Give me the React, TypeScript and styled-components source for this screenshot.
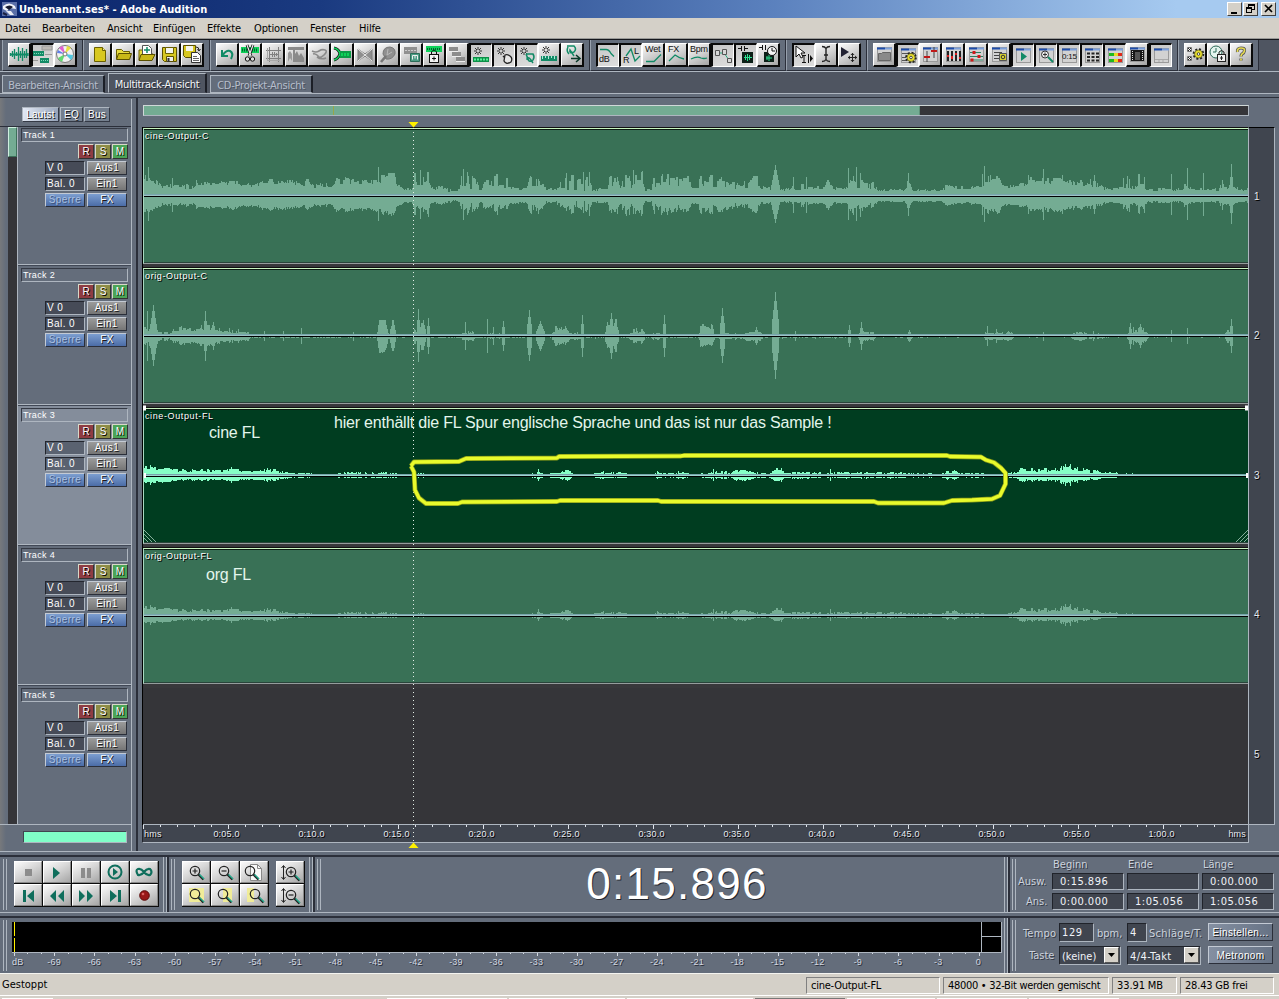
import React from 'react';
import styled, { createGlobalStyle, css } from 'styled-components';

const UI = '"DejaVu Sans Condensed", "DejaVu Sans", sans-serif';
const SANS = '"Liberation Sans", Arial, sans-serif';

const C = {
  panel: '#646d7b',
  dark: '#4f5561',
  field: '#40454f',
  pit: '#353539',
  light: '#aeb6c0',
  edge: '#2b2f3a',
  face: '#d4d0c8',
  clip: '#397156',
  clipWave: '#74ac93',
  sel: '#003d20',
  selWave: '#86ffc6',
};

const Global = createGlobalStyle`
  html, body { margin: 0; padding: 0; overflow: hidden; background: ${C.panel}; }
  * { box-sizing: border-box; }
  svg { display: block; }
`;

const Frame = styled.div`
  width: 1279px;
  height: 999px;
  display: flex;
  flex-direction: column;
  font: 11px/13px ${UI};
  font-stretch: condensed;
  white-space: nowrap;
  overflow: hidden;
  background: ${C.panel};
`;

/* ---------- title and menu ---------- */
const TitleBar = styled.header`
  height: 18px;
  flex: none;
  display: flex;
  align-items: center;
  padding: 0 3px 0 2px;
  background: linear-gradient(90deg, #0a246a 0%, #1a3a80 25%, #5a80bd 60%, #a6caf0 92%);
  color: #fff;
  font-weight: bold;
`;
const TitleText = styled.span`
  flex: 1;
  margin-left: 2px;
  letter-spacing: 0.08px;
`;
const WinButton = styled.span<{ $gap?: boolean }>`
  width: 15px;
  height: 14px;
  margin-left: ${p => (p.$gap ? 3 : 1)}px;
  background: ${C.face};
  border: 1px solid;
  border-color: #fff #404040 #404040 #fff;
`;
const MenuBar = styled.nav`
  height: 21px;
  flex: none;
  display: flex;
  align-items: center;
  padding-left: 5px;
  background: ${C.face};
  color: #000;
  border-bottom: 1px solid #9a9a98;
`;
const MenuItem = styled.span<{ $w: number }>`
  width: ${p => p.$w}px;
  letter-spacing: -0.15px;
`;

/* ---------- toolbar ---------- */
const ToolBar = styled.div`
  height: 33px;
  flex: none;
  display: flex;
  padding-left: 2px;
  background: ${C.dark};
  border-top: 1px solid #15171c;
  border-bottom: 1px solid ${C.light};
`;
const ToolGroup = styled.div`
  display: flex;
  height: 31px;
  padding: 3px 5px 0;
  background: ${C.panel};
  border: 1px solid;
  border-color: #8a93a0 ${C.edge} ${C.edge} #98a1ad;
  border-top-width: 0;
`;
const ToolButton = styled.span<{ $on?: boolean }>`
  width: 23px;
  height: 24px;
  background: ${p =>
    p.$on ? 'linear-gradient(160deg,#c6c6c6,#dedede)' : 'linear-gradient(150deg,#fbfbfb,#d2d2d2 50%,#a4a4a4)'};
  border: 1px solid;
  border-width: ${p => (p.$on ? '2px 1px 1px 2px' : '1px 2px 2px 1px')};
  border-color: ${p => (p.$on ? '#0a0a0a #fff #fff #0a0a0a' : '#fff #0a0a0a #0a0a0a #fff')};
`;

/* ---------- tabs ---------- */
const TabStrip = styled.div`
  height: 26px;
  flex: none;
  display: flex;
  align-items: flex-end;
  background: ${C.dark};
  border-bottom: 1px solid ${C.edge};
  box-shadow: inset 0 -3px 0 ${C.panel}, inset 0 -4px 0 ${C.light};
  padding: 0 0 4px 2px;
  gap: 3px;
`;
const Tab = styled.div<{ $w: number; $active?: boolean }>`
  width: ${p => p.$w}px;
  height: ${p => (p.$active ? 20 : 18)}px;
  border: 1px solid;
  border-color: ${C.light} #1c1f27 ${p => (p.$active ? C.dark : C.light)} ${C.light};
  border-right-width: 2px;
  background: ${p => (p.$active ? C.dark : C.panel)};
  color: ${p => (p.$active ? '#f4f6fa' : '#b6becb')};
  text-shadow: 1px 1px 0 ${p => (p.$active ? '#23262e' : '#4b5361')};
  text-align: center;
  line-height: ${p => (p.$active ? 21 : 19)}px;
  letter-spacing: -0.25px;
`;

/* ---------- main ---------- */
const Main = styled.div`
  height: 753px;
  flex: none;
  display: flex;
`;
const SideBar = styled.aside`
  width: 138px;
  display: flex;
  border-right: 2px solid ${C.edge};
  background: linear-gradient(90deg, #77797c 0, #646d7b 6px);
`;
const SideBody = styled.div`
  width: 131px;
  display: flex;
  flex-direction: column;
`;
const SideSplit = styled.div`
  width: 5px;
  border-left: 1px solid ${C.light};
  background: ${C.panel};
  margin-top: 1px;
`;
const ViewTabs = styled.div`
  height: 29px;
  padding: 9px 0 0 22px;
  display: flex;
  border-bottom: 1px solid ${C.edge};
`;
const ViewTab = styled.span<{ $w: number; $on?: boolean }>`
  width: ${p => p.$w}px;
  height: 15px;
  margin-right: 1px;
  border: 1px solid;
  border-color: ${C.light} #343945 #343945 ${C.light};
  background: ${p => (p.$on ? 'linear-gradient(100deg,#e4eaf6,#94a2b8)' : '#747f8e')};
  color: #fff;
  text-shadow: 1px 1px 0 #111;
  font: 10px/14px ${SANS};
  text-align: center;
  letter-spacing: 0.2px;
`;
const TrackList = styled.div`
  height: 698px;
  display: flex;
  padding-left: 8px;
  border-bottom: 1px solid ${C.light};
`;
const ScrollRail = styled.div`
  width: 11px;
  background: ${C.pit};
  border-right: 1px solid ${C.light};
`;
const ScrollThumb = styled.div`
  height: 30px;
  background: ${C.clipWave};
  border: 1px solid;
  border-color: #d0eee0 #3d705a #3d705a #d0eee0;
`;
const TrackCol = styled.div`
  flex: 1;
`;
const TrackPanel = styled.section<{ $sel?: boolean; $first?: boolean; $last?: boolean }>`
  height: ${p => (p.$first ? 138 : p.$last ? 139 : 140)}px;
  padding: ${p => (p.$first ? 1 : 3)}px 3px 0 3px;
  background: ${p => (p.$sel ? '#848d9b' : 'transparent')};
  border-bottom: ${p => (p.$last ? 0 : 1)}px solid ${C.light};
  box-shadow: ${p => (p.$first ? 'none' : 'inset 0 1px 0 #414856')};
  display: flex;
  flex-direction: column;
  align-items: flex-end;
`;
const TrackName = styled.div`
  width: 107px;
  height: 14px;
  align-self: flex-start;
  border: 1px solid;
  border-color: #353a45 ${C.light} ${C.light} #353a45;
  color: #fff;
  font: 9px/12px ${SANS};
  letter-spacing: 0.35px;
  padding-left: 1px;
`;
const ArmRow = styled.div`
  display: flex;
  gap: 1px;
  margin: 2px 0 2px 0;
`;
const Arm = styled.span<{ $bg: string }>`
  width: 16px;
  height: 15px;
  background: ${p => p.$bg};
  border: 1px solid;
  border-color: #d8d8c8 #333 #333 #d8d8c8;
  color: #fff;
  text-shadow: 1px 1px 0 #000;
  font: 10px/14px ${SANS};
  text-align: center;
`;
const CellRow = styled.div`
  display: flex;
  gap: 2px;
  margin: 0 1px 2px 0;
`;
const cell = css`
  width: 40px;
  height: 14px;
  border: 1px solid;
  font: 10px/12px ${SANS};
  letter-spacing: 0.4px;
`;
const ValueCell = styled.span<{ $sel?: boolean }>`
  ${cell}
  border-color: #23262e ${C.light} ${C.light} #23262e;
  background: ${p => (p.$sel ? '#5a6270' : '#464b57')};
  color: #fff;
  padding-left: 1px;
`;
const PushCell = styled.span<{ $blue?: boolean; $dim?: boolean }>`
  ${cell}
  border-color: #c3cad4 #2b2f3a #2b2f3a #c3cad4;
  background: ${p => (p.$blue ? 'linear-gradient(#7c9ed0,#4b6ca6)' : 'linear-gradient(#9b9b9b,#757575)')};
  color: ${p => (p.$dim ? '#a9c0e2' : '#fff')};
  text-shadow: 1px 1px 0 ${p => (p.$dim ? '#40567f' : '#1a1a1a')};
  text-align: center;
`;
const SideFoot = styled.div`
  padding: 6px 0 0 23px;
`;
const ZoomBar = styled.div`
  width: 104px;
  height: 12px;
  background: #80ffc8;
  border: 1px solid;
  border-color: #40454f ${C.light} ${C.light} #40454f;
`;

const Stage = styled.div`
  flex: 1;
  padding: 7px 0 0 4px;
`;
const Overview = styled.div`
  width: 1106px;
  height: 11px;
  margin-left: 1px;
  background: ${C.pit};
  border: 1px solid;
  border-color: #d0d8d8 ${C.light} ${C.light} #d0d8d8;
  display: flex;
`;
const OverviewPart = styled.div<{ $w: number; $mark?: boolean }>`
  width: ${p => p.$w}px;
  background: ${C.clipWave};
  border-right: 1px solid ${p => (p.$mark ? '#9aa648' : '#5d8f78')};
`;
const StageGrid = styled.div`
  display: flex;
  margin-top: 11px;
  position: relative;
`;
const Lanes = styled.div`
  width: 1107px;
  border-right: 1px solid ${C.light};
  border-left: 1px solid #000;
  border-top: 1px solid #000;
`;
const Lane = styled.div<{ $bg: string }>`
  height: 136px;
  margin-bottom: 4px;
  background: ${p => p.$bg};
  border-top: 1px solid #c8f4c0;
  border-bottom: 1px solid #959c9c;
  border-left: 1px solid #a8d8c0;
  box-shadow: inset 0 1px 0 #0a1a10, inset 0 -1px 0 #28443a, 0 -1px 0 #111, 0 4px 0 #38383b;
  position: relative;
`;
const EmptyLane = styled.div`
  height: 136px;
  background: ${C.pit};
`;
const ClipName = styled.span`
  position: absolute;
  left: 1px;
  top: 2px;
  color: #fff;
  text-shadow: 1px 1px 0 #000;
  font: 9px/11px ${SANS};
  letter-spacing: 0.62px;
`;
const Note = styled.span<{ $x: number; $y: number }>`
  position: absolute;
  left: ${p => p.$x}px;
  top: ${p => p.$y}px;
  color: #e4f6ec;
  font: 16px/18px ${SANS};
  letter-spacing: -0.21px;
`;
const Numbers = styled.div`
  width: 26px;
  height: 698px;
  background: ${C.field};
  border: 1px solid;
  border-color: #000 ${C.light} ${C.light} ${C.field};
  border-left: 0;
`;
const NumberCell = styled.div`
  height: 139.4px;
  padding: 63px 0 0 5px;
  color: #e4e8ee;
  text-shadow: 1px 1px 0 #000;
  font: 10px/12px ${SANS};
`;
const RulerBox = styled.div`
  width: 1107px;
  height: 19px;
  background: ${C.field};
  border: 1px solid;
  border-color: ${C.light} ${C.light} ${C.light} #23262e;
  margin-top: -1px;
  display: flex;
  flex-direction: column;
`;
const RulerText = styled.div`
  display: flex;
  justify-content: space-between;
  color: #e8ecf2;
  font: 9px/11px ${SANS};
  text-shadow: 1px 1px 0 #000;
  letter-spacing: 0.2px;
  padding: 0 2px 0 1px;
`;
const RulerMark = styled.span<{ $w: number; $align?: string }>`
  width: ${p => p.$w}px;
  text-align: ${p => p.$align || 'center'};
`;
const Overlay = styled.svg`
  position: absolute;
  left: 0;
  top: -8px;
`;

/* ---------- bottom ---------- */
const Splitter = styled.div`
  height: 6px;
  flex: none;
  border-top: 1px solid ${C.light};
  border-bottom: 2px solid ${C.edge};
  background: ${C.panel};
`;
const BottomRow = styled.div`
  height: 55px;
  flex: none;
  display: flex;
  padding-left: 3px;
`;
const Grip = styled.div`
  width: 4px;
  margin: 2px 0 2px;
  border: 1px solid ${C.light};
  border-width: 0 1px;
  flex: none;
`;
const VSplit = styled.div`
  width: 6px;
  flex: none;
  margin-right: 2px;
  border-left: 1px solid ${C.light};
  border-right: 2px solid ${C.edge};
  box-shadow: inset -1px 0 0 ${C.light};
`;
const PadGrid = styled.div<{ $cols: number; $ml: number; $mr: number }>`
  display: grid;
  grid-template-columns: repeat(${p => p.$cols}, 29px);
  grid-auto-rows: 23px;
  height: 46px;
  margin: 4px ${p => p.$mr}px 0 ${p => p.$ml}px;
  background: #0c0c0c;
  flex: none;
`;
const Pad = styled.span`
  width: 28px;
  height: 22px;
  background: linear-gradient(150deg, #fbfbfb, #d8d8d8 45%, #a6a6a6);
  border: 1px solid;
  border-color: #fff #888 #888 #fff;
`;
const BigTime = styled.div`
  flex: 1;
  text-align: center;
  color: #fff;
  font: 44px/54px ${SANS};
  letter-spacing: 1.25px;
  text-shadow: 1px 1px 0 #23262e;
  padding-left: 29px;
`;
const TimeGrid = styled.div`
  display: grid;
  grid-template-columns: 35px 75px 75px 72px;
  grid-template-rows: 15px 20px 20px;
  padding-left: 1px;
  width: 263px;
  flex: none;
`;
const Label = styled.span<{ $ml?: number; $mt?: number; $w?: number; $ls?: number }>`
  margin: ${p => p.$mt || 0}px 0 0 ${p => p.$ml || 0}px;
  width: ${p => (p.$w ? p.$w + 'px' : 'auto')};
  letter-spacing: ${p => p.$ls ?? 0}px;
  line-height: 15px;
  color: #ccd3dd;
  text-shadow: 1px 1px 0 #343945;
`;
const TimeField = styled.span`
  height: 17px;
  width: 72px;
  margin-top: 1px;
  background: ${C.field};
  border: 1px solid;
  border-color: #20232a ${C.light} ${C.light} #20232a;
  color: #f0f3f8;
  padding-left: 7px;
  line-height: 16px;
  letter-spacing: 0.5px;
`;
const MeterBox = styled.div`
  width: 990px;
  margin: 4px 2px 0 5px;
  flex: none;
`;
const MeterText = styled.div`
  display: flex;
  color: #d3d9e2;
  font: 9px/11px ${SANS};
  letter-spacing: 0.2px;
  text-shadow: 1px 1px 0 #2b2f3a;
`;
const MeterMark = styled.span`
  width: 40.2px;
  flex: none;
  text-align: center;
`;
const TempoBox = styled.div`
  display: flex;
  flex-direction: column;
  gap: 4px;
  padding-top: 5px;
  flex: none;
`;
const TempoRow = styled.div`
  display: flex;
  height: 19px;
`;
const SmallField = styled.span<{ $w: number; $ml?: number; $ls?: number; $lh?: number }>`
  width: ${p => p.$w}px;
  height: 19px;
  margin-left: ${p => p.$ml || 0}px;
  background: ${C.field};
  border: 1px solid;
  border-color: #20232a ${C.light} ${C.light} #20232a;
  color: #f0f3f8;
  line-height: ${p => p.$lh || 18}px;
  letter-spacing: ${p => p.$ls || 0}px;
  padding-left: 2px;
  display: flex;
  justify-content: space-between;
`;
const DropButton = styled.span`
  width: 15px;
  height: 16px;
  margin-right: 1px;
  background: ${C.face};
  border: 1px solid;
  border-color: #fff #555 #555 #fff;
`;
const ActionButton = styled.span<{ $ml: number }>`
  width: 65px;
  height: 18px;
  margin-left: ${p => p.$ml}px;
  border: 1px solid;
  border-color: #c3cad4 #2b2f3a #2b2f3a #c3cad4;
  background: linear-gradient(100deg, #8590a2, #667284);
  color: #fff;
  text-shadow: 1px 1px 0 #1a1a1a;
  font: 10px/17px ${SANS};
  letter-spacing: 0.35px;
  text-align: center;
`;
const StatusBar = styled.footer`
  height: 26px;
  flex: none;
  background: ${C.face};
  border-top: 1px solid #f4f4f0;
  color: #000;
  display: flex;
  flex-direction: column;
`;
const StatusRow = styled.div`
  display: flex;
  height: 22px;
  padding: 3px 4px 0 2px;
  gap: 3px;
  border-bottom: 1px solid #fff;
`;
const StatusText = styled.span<{ $w: number; $cell?: boolean; $ls?: number }>`
  width: ${p => p.$w}px;
  height: 17px;
  flex: none;
  line-height: 16px;
  letter-spacing: ${p => p.$ls ?? 0}px;
  border: solid ${p => (p.$cell ? '1px' : '0')};
  border-color: #808080 #fff #fff #808080;
  padding-left: ${p => (p.$cell ? 4 : 0)}px;
`;
const TaskStrip = styled.div`
  display: flex;
  gap: 2px;
  padding: 2px 0 0 2px;
`;
const TaskEdge = styled.span<{ $w: number; $c?: string }>`
  width: ${p => p.$w}px;
  height: 1px;
  background: ${p => p.$c || 'transparent'};
`;

/* ---------- icons ---------- */
const G = '#128a66';
const BG = '#0fd25a';

type IconProps = { w?: number; h?: number; children?: React.ReactNode };
const Ico = ({ w = 20, h = 21, children }: IconProps) => (
  <svg width={w} height={h} viewBox={`0 0 ${w} ${h}`} fill="none" strokeWidth={1}>
    {children}
  </svg>
);

const Win = ({ children }: { children?: React.ReactNode }) => (
  <Ico>
    <rect x="3.5" y="3.5" width="14" height="14" fill="#d2d2d2" stroke="#9a9a9a" />
    <path d="M3 4.500h8" stroke="#1c4cac" strokeWidth="2" />
    <path d="M11 4.500h7" stroke="#7ca0dc" strokeWidth="2" />
    {children}
  </Ico>
);
const Spark = ({ x = 3, y = 2 }: { x?: number; y?: number }) => (
  <path transform={`translate(${x} ${y})`} d="M4 0v3M4 5v3M0 4h3M5 4h3M1 1l2 2M7 1L5 3M1 7l2-2M7 7L5 5" stroke="#333" />
);
const Gear = ({ x, y }: { x: number; y: number }) => (
  <g transform={`translate(${x} ${y})`}>
    <circle r="4.6" stroke="#222" strokeWidth="2.4" strokeDasharray="1.9 1.7" />
    <circle r="4" fill="#e8de30" stroke="#444410" strokeWidth=".6" />
    <circle r="1.3" fill="#fff" stroke="#222" strokeWidth=".8" />
  </g>
);
const WAVE_BITS = 'M1.5 9v3M3.500 7v6M5.500 5v10M7.500 8v4M9.500 3v14M11.500 7v7M13.500 4v13M15.500 7v7M17.500 5v9M19 9v3';

const icons: Record<string, React.ReactNode> = {
  wave: <Ico><path d={WAVE_BITS} stroke={G} strokeWidth="1.3" /><path d="M1 10.500h18" stroke={G} strokeWidth="2" /></Ico>,
  multi: (
    <Ico>
      <path d="M9 1h10v4H9z" fill="#bdb9b4" stroke="#999" /><path d="M0 6h11v5H0z" fill={G} /><path d="M7 13h9v5H7z" fill={G} />
      <path d="M1 8.500h9M8 15.500h7" stroke="#7fd8b8" strokeDasharray="1 1" /><path d="M12 9.500h7M0 15.500h5" stroke="#999" />
    </Ico>
  ),
  cd: (
    <Ico>
      <circle cx="10" cy="10" r="8.500" fill="#f2f2f2" stroke="#777" />
      <path d="M10 10L4 4a8 8 0 0 1 4-2z" fill="#e060d0" /><path d="M10 10l6-6a8 8 0 0 0-4-2z" fill="#e8e040" />
      <path d="M10 10l8 1a8 8 0 0 1-2 5z" fill="#50c8e0" /><path d="M10 10l-7 4a8 8 0 0 0 4 4z" fill="#60d870" />
      <path d="M10 10L2 9l1-3z" fill="#6080e8" /><circle cx="10" cy="10" r="2" fill="#fff" stroke="#777" />
    </Ico>
  ),
  file: <Ico><path d="M4.500 3.500h8l3 3v11h-11z" fill="#d8c820" stroke="#6a6000" /><path d="M12.500 3.500v3h3" fill="#f4ec90" stroke="#6a6000" /></Ico>,
  open: <Ico><path d="M3.500 15V5.500h5l2 2h6V10" fill="#e8dc40" stroke="#6a6000" /><path d="M3.500 15.500l2-6h13l-2 6z" fill="#c8b818" stroke="#5a5000" /></Ico>,
  openAdd: (
    <Ico>
      <path d="M3 16V6h4v4h10" fill="#e8dc40" stroke="#6a6000" />
      <path d="M6.500 1.500h6l3 3v7h-9z" fill="#fff" stroke="#555" /><path d="M8 6h6M11 3v6" stroke={G} strokeWidth="1.5" />
      <path d="M3 16.500l2-6h14l-3 6z" fill="#c8b818" stroke="#5a5000" />
    </Ico>
  ),
  save: (
    <Ico>
      <path d="M3.500 3.500h14v14h-12l-2-2z" fill="#d8c820" stroke="#5a5000" /><path d="M6.500 3.500h8v6h-8z" fill="#f4f4ec" stroke="#6a6000" />
      <path d="M7.500 12.500h7v5h-7z" fill="#eee" stroke="#5a5000" /><path d="M9.500 14v4" stroke="#333" strokeWidth="2" />
    </Ico>
  ),
  saveAs: (
    <Ico>
      <path d="M1.500 1.500h12v12h-10l-2-2z" fill="#d8c820" stroke="#5a5000" /><path d="M4 2h7v5H4z" fill="#f4f4ec" />
      <path d="M14 3q3 0 3 3M15.500 5l1.500 2 1.500-2" stroke="#222" /><path d="M9.500 8.500h6l3 3v7h-9z" fill="#fff" stroke="#333" />
      <path d="M11 12.500h4M11 14.500h6M11 16.500h6" stroke="#666" />
    </Ico>
  ),
  undo: <Ico><path d="M5 6v6h6M6 11Q9 6 13 7q4 2 1 8" stroke={G} strokeWidth="2" /></Ico>,
  cut: (
    <Ico>
      <path d="M1 3h18v6H1z" fill={BG} /><path d="M2 6h16" stroke="#056030" strokeDasharray="1 1" strokeWidth="3" />
      <path d="M7 1l4 11M13 1L9 12" stroke="#111" strokeWidth="2.8" /><path d="M7 1l4 11M13 1L9 12" stroke="#eee" strokeWidth="1.200" />
      <circle cx="7.500" cy="15" r="2.200" stroke="#111" fill="#ddd" /><circle cx="12.500" cy="15" r="2.200" stroke="#111" fill="#ddd" />
    </Ico>
  ),
  crop: <Ico><path d="M6.500 3v15M15.500 3v15M3 6.500h15M3 14.500h15" stroke="#808080" /><path d="M7 10.500h8M9.500 8v5M11.500 8v5M13.500 9v3" stroke="#808080" /><path d="M4.500 4v12M4 16.500h13" stroke="#a8a8a8" /></Ico>,
  trim: <Ico><path d="M2 3h16v3H9v4l2-3 2 5 2-3 3 5v4H7V6H2z" fill="#8a8a8a" /><path d="M2 9l2-2 2 3v7l-2-3-2 4z" fill="#9a9a9a" /></Ico>,
  plug: <Ico><path d="M3 7q4 2 7 0t6-1-1 5-7 2q4 3 9 1M4 10q3-1 6 3" stroke="#8a8a8a" strokeWidth="1.600" /></Ico>,
  merge: <Ico><path d="M2 4q5 1 6 6-2 5-6 6" stroke="#111" strokeWidth="3" /><path d="M2 4q5 1 6 6-2 5-6 6" stroke={BG} strokeWidth="1.500" /><path d="M8 7h11v7H8z" fill="#0c9c48" /><path d="M9 10.500h9" stroke={BG} strokeWidth="3" strokeDasharray="2 1" /></Ico>,
  fade: <Ico><path d="M3 5v12l7-5 7 5V5l-7 5z" fill="#8e8e8e" stroke="#7a7a7a" /><path d="M3 5l14 12M17 5L3 17" stroke="#e8e8e8" /></Ico>,
  brush: <Ico><path d="M5 10q0-7 7-7 6 1 5 7-3 6-9 5z" fill="#909090" stroke="#777" /><path d="M8 12l-5 6" stroke="#777" strokeWidth="2.600" /><path d="M10 5l-1 6 5-3" stroke="#b8b8b8" /></Ico>,
  mix: <Ico><path d="M3 3h13v7H3z" fill="#909090" /><path d="M4 6.500h11" stroke="#ccc" strokeDasharray="2 1" /><path d="M9.500 9.500h9v8h-9z" fill="#4c9c84" stroke="#2c6c58" /><path d="M11.500 15.500v-4h5v4M14 11.500v3" stroke="#eee" /></Ico>,
  lock: <Ico><path d="M2 2h16v6H2z" fill={BG} /><path d="M3 5h14" stroke="#056030" strokeDasharray="1 1" strokeWidth="2" /><path d="M7.500 11V8q2.500-4 5 0v3" stroke="#111" /><rect x="5.500" y="10.500" width="9" height="8" fill="#f4f4f4" stroke="#111" /><path d="M8 14.500h4M10 12.500v4" stroke="#111" /></Ico>,
  stack: <Ico><path d="M2 3h9v4H2zM5 8h9v4H5zM9 13h9v4H9z" fill="#8c8c8c" /><path d="M2 7.500h9M5 12.500h9M9 17.500h9" stroke="#eee" /></Ico>,
  sparkWave: <Ico><Spark /><path d="M2 12h16v5H2z" fill="#0c9048" /><path d="M3 14.500h14" stroke="#5af09a" strokeWidth="2" strokeDasharray="2 1" /></Ico>,
  sparkHand: <Ico><Spark /><path d="M9 11l2 2M11 10q2-1 5 1t1 6q-5 3-7-1z" stroke="#222" strokeWidth="1.300" fill="#e6e6e6" /></Ico>,
  sparkLoop: <Ico><Spark /><path d="M9 9h7q2 3 0 6-4 3-5-1 0-4 5 4M9 9q2 3 1 6" stroke={G} strokeWidth="1.500" /></Ico>,
  sparkGrid: <Ico><Spark /><path d="M2 12h16v5H2z" fill={G} /><path d="M3.500 12v3M6.500 12v2M9.500 12v3M12.500 12v2M15.500 12v3" stroke="#b0e8d8" /></Ico>,
  loopArrow: <Ico><path d="M5 2h7q3 3 0 6-5 2-4-2l4 6M6 3q-2 4 1 7" stroke={G} strokeWidth="1.500" /><path d="M9 14.500h8M14 11l4 3.500-4 3.500" stroke="#083828" strokeWidth="1.500" /></Ico>,
  curve: <Ico><path d="M2 4.500h6q3 0 5 4l3 3" stroke={G} strokeWidth="1.300" /></Ico>,
  pan: <Ico><path d="M5 11l5-7 4 12 5-5" stroke={G} strokeWidth="1.300" /></Ico>,
  wet: <Ico><path d="M3 17.500h8l7-7" stroke={G} strokeWidth="1.300" /></Ico>,
  fx: <Ico><path d="M3 17l6-6q4 3 9 4" stroke={G} strokeWidth="1.300" /></Ico>,
  bpm: <Ico><path d="M2 15q6-3 10-1 3 1 6 0" stroke={G} strokeWidth="1.300" /></Ico>,
  nodes: <Ico><path d="M5 8h6l5 7" stroke="#2aa880" /><path d="M2.500 5.500h4v5h-4zM9.500 4.500h4v5h-4zM14.500 13.500h4v4h-4z" fill="#d8d8d8" stroke="#555" /></Ico>,
  snapWave: <Ico><path d="M2 3.500h3M5.500 1v5M8.500 1v5M9 3.500h3" stroke="#111" /><path d="M6 7h11v11H6z" fill="#0c2018" /><path d="M8 12.500h8M9.500 10v5M11.500 9v7M13.500 10v5" stroke="#2ce090" /></Ico>,
  snapClock: <Ico><path d="M1 3.500h3M4.500 1v5M7.500 1v5" stroke="#111" /><path d="M6 8h10v10H6z" fill="#0c2018" /><path d="M8 14h6M9 12v4M11 11v6" stroke="#2ce090" /><circle cx="14" cy="7" r="4.500" fill="#f4f4f4" stroke="#111" /><path d="M14 4v3h3" stroke="#111" /></Ico>,
  hybrid: <Ico><path d="M2 1v11l3-3 2 4 2-1-2-4h4z" fill="#fff" stroke="#111" /><path d="M8 10.500h4M8 17.500h4M10 11v6M14.500 9v9" stroke="#111" /><path d="M16 10v7l3-3.500z" fill="#111" /></Ico>,
  ibeam: <Ico><path d="M6 2.500q3 0 4 2 1-2 4-2M6 17.500q3 0 4-2 1 2 4 2M10 4v12M8 11h4" stroke="#222" strokeWidth="1.400" /></Ico>,
  move: <Ico><path d="M2 3v10l8-5z" fill="#223" /><path d="M9 13.500h9M13.500 9v9" stroke="#222" /><path d="M9 13.500l2-2v4zM18 13.500l-2-2v4zM13.500 9l-2 2h4zM13.500 18l-2-2h4z" fill="#222" /></Ico>,
  wFolder: <Win><path d="M4.500 9.500h3l1-1h8v8h-12z" fill="#8a8a8a" stroke="#666" /></Win>,
  wGear: <Win><path d="M4 8.500h13M4 12.500h4M4 15.500h4" stroke="#555" /><Gear x={13} y={12.5} /></Win>,
  wFader: <Win><path d="M7 7v11M14 3v11" stroke="#444" /><path d="M4 13h6M11 7h6" stroke="#c01818" strokeWidth="2" /></Win>,
  wBars: <Win><path d="M5 7v10M9 7v10M13 7v10M17 7v10" stroke="#222" strokeWidth="2" /><path d="M5 11v2M9 12v3M13 9v2M17 13v2" stroke="#e02020" strokeWidth="2" /></Win>,
  wMixer: <Win><path d="M4 8.500h11M4 12.500h13M4 16h13" stroke="#2a8060" /><path d="M8 7v3M13 11v3M6 14.500v3" stroke="#d01818" strokeWidth="3" /></Win>,
  wCue: <Win><path d="M5 8.500h8M5 11.500h5M5 14.500h5" stroke="#444" /><path d="M10.500 9.500h7v7h-7z" fill="#d8d030" stroke="#555" /><circle cx="14" cy="13" r="1.800" stroke="#333" /></Win>,
  wPlay: <Win><path d="M8 7v9l6-4.500z" fill={G} /></Win>,
  wZoom: <Win><circle cx="9" cy="9.500" r="3.500" stroke="#333" fill="#eee" /><path d="M7 9.500h4M9 7.500v4" stroke="#333" /><path d="M12 12l5 5" stroke={G} strokeWidth="2" /></Win>,
  wTime: <Win />,
  wTable: <Win><path d="M5 8.500h3M9.500 8.500h3M14 8.500h3M5 12h3M9.500 12h3M14 12h3M5 15.500h3M9.500 15.500h3M14 15.500h3" stroke="#222" strokeWidth="2" /></Win>,
  wLevel: <Win><path d="M4 8h5v3H4zM4 14h5v3H4z" fill="#20b820" /><path d="M9 8h4v3H9zM9 14h4v3H9z" fill="#e8d820" /><path d="M13 8h4v3h-4zM13 14h4v3h-4z" fill="#e02818" /></Win>,
  wFilm: <Win><path d="M4 6h13v11H4z" fill="#181818" /><path d="M5.500 7v10M15.500 7v10" stroke="#ddd" strokeDasharray="1 1" /><path d="M8 8h5v8H8z" fill="#555" /></Win>,
  wStatus: <Win><path d="M4 14.500h13M8 15v2M12 15v2" stroke="#aaa" /></Win>,
  prefs: <Ico><path d="M2.500 3.500h4v4h-4zM2.500 12.500h4v4h-4z" stroke="#777" fill="#f4f4f4" /><path d="M3 4l3 3M6 4L3 7M3 13l3 3M6 13l-3 3" stroke="#222" /><Gear x={13.5} y={10} /></Ico>,
  clockLock: <Ico><circle cx="8" cy="8" r="6" fill="#e4f4ee" stroke="#2a6a58" /><path d="M8 4v4H5" stroke="#2a6a58" /><path d="M11 11V8q2.500-3 5 0v3" stroke="#222" /><rect x="9.500" y="10.500" width="8" height="7" fill="#f2f2f2" stroke="#222" /><path d="M13.500 12v4M12 14h3" stroke="#222" /></Ico>,
  help: <Ico><path d="M6.500 8q-.5-4 3.500-4t3.500 2.600-2.500 3.400q-1 1-1 2.500M10 14.500v2" stroke="#555" strokeWidth="3.200" /><path d="M6.500 8q-.5-4 3.500-4t3.500 2.600-2.500 3.400q-1 1-1 2.500M10 14.500v2" stroke="#e8dc50" strokeWidth="1.700" /></Ico>,
};

const IconWord = styled.span<{ $x: number; $y: number; $s?: number }>`
  position: absolute;
  left: ${p => p.$x}px;
  top: ${p => p.$y}px;
  font: ${p => p.$s || 8}px/8px ${SANS};
  color: #111;
  letter-spacing: -0.2px;
`;
const WordWrap = styled.span`
  position: relative;
  display: block;
`;
const words: Record<string, [string, number, number, number][]> = {
  curve: [['dB', 1, 10, 9]],
  pan: [['L', 13, 2, 9], ['R', 2, 11, 9]],
  wet: [['Wet', 2, 1, 9]],
  fx: [['FX', 2, 1, 9]],
  bpm: [['Bpm', 1, 1, 9]],
  wTime: [['0:15', 3, 8, 8]],
};

const groups: [string, boolean?][][] = [
  [['wave'], ['multi', true], ['cd']],
  [['file'], ['open'], ['openAdd'], ['save'], ['saveAs']],
  [['undo'], ['cut'], ['crop'], ['trim'], ['plug'], ['merge'], ['fade'], ['brush'], ['mix'], ['lock'], ['stack'],
    ['sparkWave', true], ['sparkHand', true], ['sparkLoop', true], ['sparkGrid'], ['loopArrow']],
  [['curve', true], ['pan', true], ['wet'], ['fx'], ['bpm'], ['nodes', true], ['snapWave', true], ['snapClock']],
  [['hybrid', true], ['ibeam'], ['move']],
  [['wFolder'], ['wGear', true], ['wFader'], ['wBars'], ['wMixer'], ['wCue'], ['wPlay', true], ['wZoom', true],
    ['wTime', true], ['wTable', true], ['wLevel', true], ['wFilm'], ['wStatus', true]],
  [['prefs'], ['clockLock'], ['help']],
];

const T = '#0f6e5c';
const transport: React.ReactNode[] = [
  <path d="M10 7h7v7h-7z" fill="#8c8c8c" />,
  <path d="M9 5v12l7-6z" fill={T} />,
  <path d="M8 6h4v10H8zM14 6h4v10h-4z" fill="#8c8c8c" />,
  <><circle cx="13" cy="10" r="6.500" stroke={T} strokeWidth="2" /><path d="M11 6v8l5-4z" fill={T} /></>,
  <path d="M13 10q-3-4-6-3t0 6q3 1 6-3t6-3q3 3 0 6-3 1-6-3z" stroke={T} strokeWidth="2.200" />,
  <path d="M8 5h3v12H8zM19 5v12l-7-6z" fill={T} />,
  <path d="M12 5v12l-6-6zM20 5v12l-6-6z" fill={T} />,
  <path d="M6 5v12l6-6zM14 5v12l6-6z" fill={T} />,
  <path d="M8 5v12l7-6zM16 5h3v12h-3z" fill={T} />,
  <><circle cx="13.500" cy="10.500" r="4.800" fill="#981818" stroke="#5a0808" /><circle cx="12" cy="9" r="1.300" fill="#d86060" /></>,
];

const Lens = ({ x, y, sign, fill = 'none' }: { x: number; y: number; sign?: '+' | '-'; fill?: string }) => (
  <>
    <circle cx={x} cy={y} r="4.700" stroke="#222" strokeWidth="1.200" fill={fill} />
    {sign && <path d={`M${x - 2.500} ${y}h5${sign === '+' ? `M${x} ${y - 2.500}v5` : ''}`} stroke="#222" strokeWidth="1.200" />}
    <path d={`M${x + 3.500} ${y + 3.500}l5 5`} stroke="#222" strokeWidth="2.400" />
    <path d={`M${x + 4.500} ${y + 3.500}l4.500 4.500`} stroke="#20b090" strokeWidth="1.300" />
  </>
);
const zoomMain: React.ReactNode[] = [
  <Lens x={12} y={9} sign="+" />,
  <Lens x={12} y={9} sign="-" />,
  <><path d="M9.500 2.500h7l4 4v12h-11z" fill="#f8f8f8" stroke="#888" /><path d="M16.500 2.500v4h4" stroke="#888" /><Lens x={9} y={9} /></>,
  <><path d="M6 3h15v14H6z" fill="#f0ec98" /><Lens x={12} y={9} fill="#f0ec98" /></>,
  <><path d="M11 3h9v14h-9z" fill="#f0ec98" /><Lens x={11} y={9} /></>,
  <><path d="M6 3h7v14H6z" fill="#f0ec98" /><Lens x={14} y={9} /></>,
];
const Tall = () => <path d="M6.500 4v13M4.500 6l2-2.500 2 2.500M4.500 15l2 2.500 2-2.500" stroke="#222" />;
const zoomVert: React.ReactNode[] = [
  <><Tall /><Lens x={14} y={10} sign="+" /></>,
  <><Tall /><Lens x={14} y={10} sign="-" /></>,
];

/* ---------- waveforms ---------- */
type Seg = [number, number, number, number];
type Spike = [number, number, number?];

// Segments are [from, to, peak, floor]; spikes are [x, height, half width].
const dialog: Seg[] = [
  [144, 156, 23, 13], [156, 161, 16, 10], [161, 195, 13, 8], [195, 225, 17, 12], [225, 240, 17, 11], [240, 262, 15, 10],
  [262, 285, 20, 13], [285, 312, 18, 11], [312, 333, 14, 9], [333, 372, 20, 13], [372, 386, 24, 13], [386, 396, 26, 13],
  [396, 403, 14, 9], [403, 413, 9, 7], [413, 430, 27, 10], [430, 445, 11, 7], [445, 461, 10, 5], [461, 478, 28, 8],
  [478, 483, 12, 6], [483, 509, 24, 7], [509, 529, 11, 6], [529, 545, 27, 9], [545, 558, 10, 6], [558, 591, 26, 6],
  [591, 609, 10, 5], [609, 619, 28, 10], [619, 623, 12, 7], [623, 644, 28, 9], [644, 653, 8, 5], [653, 677, 28, 8],
  [677, 691, 21, 9], [691, 699, 12, 8], [699, 729, 27, 10], [729, 751, 17, 8], [751, 759, 22, 12], [759, 770, 11, 7],
  [770, 792, 9, 6], [792, 810, 13, 7], [810, 826, 11, 8], [826, 833, 20, 8], [833, 850, 11, 7], [850, 863, 29, 8],
  [863, 877, 16, 7], [877, 906, 8, 6], [906, 911, 18, 7], [911, 944, 8, 6], [944, 949, 14, 8], [949, 982, 11, 7],
  [982, 989, 32, 10], [989, 1001, 23, 11], [1001, 1016, 14, 9], [1016, 1028, 14, 10], [1028, 1066, 20, 13],
  [1066, 1093, 18, 11], [1093, 1103, 15, 9], [1103, 1123, 10, 7], [1123, 1130, 26, 8], [1130, 1136, 12, 7],
  [1136, 1146, 25, 8], [1146, 1183, 10, 6], [1183, 1190, 14, 8], [1190, 1220, 9, 6], [1220, 1228, 14, 7],
  [1228, 1236, 13, 8], [1236, 1248, 10, 6],
];
const dialogSpikes: Spike[] = [
  [148, 30], [172, 19], [378, 30], [420, 27], [463, 28], [775, 32, 4], [793, 20], [806, 20], [848, 29], [856, 30],
  [908, 24, 1], [984, 31], [1028, 22], [1043, 28], [1062, 22], [1094, 22, 2], [1171, 23], [1187, 29], [1203, 24],
  [1222, 17], [1231, 33, 1],
];
const speech: Seg[] = [
  [144, 150, 14, 5], [150, 158, 20, 9], [158, 173, 6, 2], [173, 194, 11, 5], [194, 219, 12, 6], [219, 240, 9, 4],
  [240, 250, 6, 3], [250, 378, 3, 1], [378, 387, 21, 13], [387, 391, 4, 2], [391, 395, 21, 12], [395, 414, 2, 1],
  [414, 417, 14, 6], [420, 425, 17, 10], [425, 463, 3, 1], [463, 474, 7, 3], [474, 500, 4, 1], [500, 527, 3, 1],
  [553, 568, 12, 5], [568, 580, 5, 3], [580, 606, 3, 1], [606, 618, 18, 8], [618, 630, 3, 1], [630, 644, 10, 4],
  [644, 652, 2, 1], [652, 662, 5, 2], [662, 699, 3, 1], [699, 714, 13, 5], [714, 745, 4, 2], [745, 762, 7, 3],
  [762, 845, 3, 1], [859, 875, 6, 3], [875, 985, 2, 1], [985, 1013, 6, 3], [1013, 1072, 2, 1], [1072, 1085, 6, 3],
  [1085, 1108, 4, 1], [1108, 1128, 2, 1], [1128, 1148, 10, 4], [1148, 1226, 2, 1], [1226, 1230, 10, 6], [1230, 1248, 2, 1],
];
const speechSpikes: Spike[] = [
  [153, 32, 3], [147, 26], [205, 26, 1], [213, 15, 2], [301, 9], [283, 6], [264, 6], [353, 5], [418, 28, 1], [428, 19, 1],
  [465, 15], [487, 18], [493, 10], [503, 16, 1], [529, 27, 2], [540, 16, 4], [582, 22, 1], [611, 24, 2], [664, 22, 1],
  [722, 29, 2], [756, 10, 2], [775, 45, 3], [795, 6], [849, 12, 1], [861, 15, 1], [909, 7, 2], [987, 11], [996, 8],
  [1043, 5], [1093, 6], [1130, 14, 1], [1140, 13, 2], [1171, 7], [1187, 9], [1231, 18, 1],
];
const ambient: Seg[] = [
  [144, 172, 11, 7], [172, 200, 8, 5], [200, 214, 8, 5], [214, 228, 7, 5], [228, 240, 9, 6], [240, 262, 7, 5],
  [262, 278, 8, 5], [278, 290, 6, 4], [290, 312, 4, 3], [312, 337, 3, 2], [337, 397, 5, 3], [397, 413, 3, 2],
  [413, 428, 4, 3], [428, 532, 3, 2], [532, 558, 5, 3], [558, 571, 8, 4], [571, 595, 3, 3], [595, 608, 6, 3],
  [608, 629, 5, 3], [629, 654, 3, 2], [654, 660, 6, 3], [660, 675, 4, 3], [675, 687, 6, 3], [687, 703, 3, 3],
  [703, 729, 6, 3], [729, 733, 3, 3], [733, 754, 8, 5], [754, 772, 5, 3], [772, 784, 9, 6], [784, 808, 6, 3],
  [808, 840, 5, 3], [840, 905, 5, 3], [905, 945, 4, 3], [945, 957, 7, 4], [957, 985, 4, 3], [985, 1008, 3, 2],
  [1008, 1018, 5, 3], [1018, 1044, 9, 5], [1044, 1060, 10, 5], [1060, 1074, 12, 7], [1074, 1088, 9, 5],
  [1088, 1100, 7, 4], [1100, 1119, 5, 3], [1119, 1136, 4, 2], [1136, 1248, 3, 2],
];
const ambientSpikes: Spike[] = [
  [150, 12], [267, 9], [231, 10], [538, 8, 1], [713, 8], [830, 8], [1065, 13, 1], [1070, 13, 1], [1077, 10],
];

function wavePath(segs: Seg[], spikes: Spike[], down: number, lift: number, seed: number, blend: number) {
  let s = seed;
  const rnd = () => {
    s = (s * 1664525 + 1013904223) % 4294967296;
    return s / 4294967296;
  };
  // Averages the envelope over neighbouring columns so that segments run into each other.
  const envelope = (x: number) => {
    let peak = 0;
    let floor = 0;
    for (let k = -blend; k <= blend; k++) {
      const xx = Math.min(1247, Math.max(144, x + k));
      const g = segs.find(q => xx >= q[0] && xx < q[1]);
      peak += g ? g[2] : 2;
      floor += g ? g[3] : 1;
    }
    const n = blend * 2 + 1;
    return [peak / n, floor / n];
  };
  let d = '';
  let r = 0.5;
  for (let x = 144; x < 1248; x++) {
    const [peak, floor] = envelope(x);
    // About a third of the columns repeat the one before, which gives the blocky peaks.
    if (rnd() > 0.35) r = Math.pow(rnd(), 1.1);
    const r2 = rnd();
    let up = floor + (peak - floor) * r;
    let dn = floor + (peak - floor) * (0.65 * r + 0.35 * r2);
    for (const [sx, h, hw = 0] of spikes) {
      const dist = Math.abs(x - sx);
      if (dist <= hw) {
        const v = h * (1 - (dist / (hw + 1)) * 0.8);
        up = Math.max(up, v);
        dn = Math.max(dn, v);
      }
    }
    const below = Math.max(0, Math.round(dn * down - lift));
    d += `M${x - 143.5} ${68 - Math.round(up)}V${68 + below}`;
  }
  return d;
}

type TrackInfo = { clip?: string; path?: string; sel?: boolean };
const tracks: TrackInfo[] = [
  { clip: 'cine-Output-C', path: wavePath(dialog, dialogSpikes, 0.86, 1.5, 7, 1) },
  { clip: 'orig-Output-C', path: wavePath(speech, speechSpikes, 0.95, 1.2, 21, 1) },
  { clip: 'cine-Output-FL', path: wavePath(ambient, ambientSpikes, 0.9, 2.8, 33, 2), sel: true },
  { clip: 'orig-Output-FL', path: wavePath(ambient, ambientSpikes, 0.9, 2.8, 33, 2) },
  {},
];

const Clip = ({ t }: { t: TrackInfo }) => (
  <Lane $bg={t.sel ? C.sel : C.clip}>
    <svg width="1104" height="134" viewBox="0 0 1104 134" shapeRendering="crispEdges">
      <path d={t.path} stroke={t.sel ? C.selWave : C.clipWave} strokeWidth="1" />
      <path d="M0 65.500H1104" stroke="#78a4ac" />
      <path d="M0 66.500H1104" stroke={t.sel ? '#9cd8d0' : '#9cc4c4'} />
      <path d="M0 67.500H1104" stroke="#000" />
      {t.sel && (
        <>
          <path d="M0 121l12 12M0 125l8 8M0 129l4 4M1104 121l-12 12M1104 125l-8 8M1104 129l-4 4" stroke="#86b09c" />
          <path d="M0 64h2v5H0zM1102 64h2v5h-2z" fill="#fff" />
        </>
      )}
    </svg>
    <ClipName>{t.clip}</ClipName>
  </Lane>
);

const OUTLINE =
  'M411 466L414 462L459 461.500L466 458.500L557 458L559 456.500L681 456L684 455.500L947 455.500L950 456.500L981 457L986 460L994 462.500L1001 468L1005.500 473L1005.500 484L1000 495.500L992 499L972 500L952 500.500L944 503L878 503L874 501.500L661 501.500L658 500.500L560 500.500L557 501.500L462 502L458 503.500L426 503.500L419 498L415 490L414 472L411 466';

const rulerLabels = ['0:05.0', '0:10.0', '0:15.0', '0:20.0', '0:25.0', '0:30.0', '0:35.0', '0:40.0', '0:45.0', '0:50.0', '0:55.0', '1:00.0'];

const TrackControls = ({ n, sel }: { n: number; sel?: boolean }) => (
  <TrackPanel $sel={sel} $first={n === 1} $last={n === 5}>
    <TrackName>Track {n}</TrackName>
    <ArmRow>
      <Arm $bg="#8f3c42">R</Arm>
      <Arm $bg="#8d8c45">S</Arm>
      <Arm $bg="#4ca457">M</Arm>
    </ArmRow>
    <CellRow><ValueCell $sel={sel}>V 0</ValueCell><PushCell>Aus1</PushCell></CellRow>
    <CellRow><ValueCell $sel={sel}>Bal. 0</ValueCell><PushCell>Ein1</PushCell></CellRow>
    <CellRow><PushCell $blue $dim>Sperre</PushCell><PushCell $blue>FX</PushCell></CellRow>
  </TrackPanel>
);

const ticks = (from: number, step: number, count: number, major: number, long: number, short: number) => {
  let d = '';
  for (let i = 0; i <= count; i++) d += `M${(from + i * step).toFixed(1)} 0v${i % major === 0 ? long : short}`;
  return d;
};

export default function App() {
  return (
    <Frame>
      <Global />
      <TitleBar>
        <svg width="15" height="16" viewBox="0 0 15 16">
          <path d="M0 1h15v14H0z" fill="#5a6fa8" />
          <path d="M1 5q6-5 12 0l1 3-6-1-3 3-4-2z" fill="#f0f4fa" />
          <path d="M3 6q5-3 8 0l-4 3z" fill="#151a30" />
          <path d="M4 10l4 4h4l-3-4z" fill="#e8ecf4" /><path d="M1 12l4 2" stroke="#1a2040" strokeWidth="2" />
        </svg>
        <TitleText>Unbenannt.ses* - Adobe Audition</TitleText>
        <WinButton><svg width="13" height="12"><path d="M3 9h6v2H3z" fill="#000" /></svg></WinButton>
        <WinButton>
          <svg width="13" height="12" fill="none" stroke="#000" shapeRendering="crispEdges">
            <path d="M4.500 4V1.500h6v5H8M4 2.500h7M2.500 4.500h5v5h-5zM2 5.500h6" />
          </svg>
        </WinButton>
        <WinButton $gap><svg width="13" height="12"><path d="M3 2l7 7M10 2L3 9" stroke="#000" strokeWidth="1.700" /></svg></WinButton>
      </TitleBar>
      <MenuBar>
        {([['Datei', 37], ['Bearbeiten', 65], ['Ansicht', 46], ['Einfügen', 54], ['Effekte', 47], ['Optionen', 56], ['Fenster', 49], ['Hilfe', 40]] as [string, number][]).map(
          ([t, w]) => <MenuItem key={t} $w={w}>{t}</MenuItem>,
        )}
      </MenuBar>
      <ToolBar>
        {groups.map((g, i) => (
          <ToolGroup key={i}>
            {g.map(([name, on]) => (
              <ToolButton key={name} $on={on}>
                <WordWrap>
                  {icons[name]}
                  {(words[name] || []).map(([w, x, y, s]) => <IconWord key={w} $x={x} $y={y} $s={s}>{w}</IconWord>)}
                </WordWrap>
              </ToolButton>
            ))}
          </ToolGroup>
        ))}
      </ToolBar>
      <TabStrip>
        <Tab $w={103}>Bearbeiten-Ansicht</Tab>
        <Tab $w={99} $active>Multitrack-Ansicht</Tab>
        <Tab $w={103}>CD-Projekt-Ansicht</Tab>
      </TabStrip>
      <Main>
        <SideBar>
          <SideBody>
            <ViewTabs>
              <ViewTab $w={37} $on>Lautst</ViewTab>
              <ViewTab $w={23}>EQ</ViewTab>
              <ViewTab $w={26}>Bus</ViewTab>
            </ViewTabs>
            <TrackList>
              <ScrollRail><ScrollThumb /></ScrollRail>
              <TrackCol>
                {tracks.map((t, i) => <TrackControls key={i} n={i + 1} sel={t.sel} />)}
              </TrackCol>
            </TrackList>
            <SideFoot><ZoomBar /></SideFoot>
          </SideBody>
          <SideSplit />
        </SideBar>
        <Stage>
          <Overview>
            <OverviewPart $w={190} $mark />
            <OverviewPart $w={586} />
          </Overview>
          <StageGrid>
            <Lanes>
              {tracks.map((t, i) => (t.clip ? <Clip key={i} t={t} /> : <EmptyLane key={i} />))}
            </Lanes>
            <Numbers>
              {tracks.map((_, i) => <NumberCell key={i}>{i + 1}</NumberCell>)}
            </Numbers>
            <Note $x={192} $y={287}>hier enthällt die FL Spur englische Sprache und das ist nur das Sample !</Note>
            <Note $x={67} $y={297}>cine FL</Note>
            <Note $x={64} $y={439}>org FL</Note>
            <Overlay width="1110" height="740" viewBox="142 119 1110 740">
              <path d="M413.500 128V842" stroke="#e4efe8" strokeDasharray="1 3" shapeRendering="crispEdges" />
              <path d="M408.500 122h10l-5 5.500z" fill="#fff000" />
              <path d="M408.500 848h10l-5-5.500z" fill="#fff000" />
              <path d="M143 405.500h3v5h-3zM1245 405.500h3v5h-3z" fill="#fff" />
              <path d={OUTLINE} fill="none" stroke="#8a9c18" strokeWidth="4.800" strokeLinejoin="round" />
              <path d={OUTLINE} fill="none" stroke="#e8fb2c" strokeWidth="3.400" strokeLinejoin="round" />
            </Overlay>
          </StageGrid>
          <RulerBox>
            <svg width="1105" height="4" viewBox="143 0 1105 4" shapeRendering="crispEdges">
              <path d={ticks(143, 17, 65, 5, 4, 2)} stroke="#e0e4ea" />
            </svg>
            <RulerText>
              <RulerMark $w={40} $align="left">hms</RulerMark>
              {rulerLabels.map(l => <RulerMark key={l} $w={85}>{l}</RulerMark>)}
              <RulerMark $w={42} $align="right">hms</RulerMark>
            </RulerText>
          </RulerBox>
        </Stage>
      </Main>
      <Splitter />
      <BottomRow>
        <Grip />
        <PadGrid $cols={5} $ml={7} $mr={4}>
          {transport.map((ic, i) => <Pad key={i}><Ico w={26} h={20}>{ic}</Ico></Pad>)}
        </PadGrid>
        <VSplit />
        <Grip />
        <PadGrid $cols={3} $ml={7} $mr={7}>
          {zoomMain.map((ic, i) => <Pad key={i}><Ico w={26} h={20}>{ic}</Ico></Pad>)}
        </PadGrid>
        <PadGrid $cols={1} $ml={0} $mr={4}>
          {zoomVert.map((ic, i) => <Pad key={i}><Ico w={26} h={20}>{ic}</Ico></Pad>)}
        </PadGrid>
        <VSplit />
        <Grip />
        <BigTime>0:15.896</BigTime>
        <VSplit />
        <Grip />
        <TimeGrid>
          <Label />
          <Label $ml={1}>Beginn</Label>
          <Label $ml={1}>Ende</Label>
          <Label $ml={1}>Länge</Label>
          <Label $ml={1} $mt={2}>Ausw.</Label>
          <TimeField>0:15.896</TimeField>
          <TimeField />
          <TimeField>0:00.000</TimeField>
          <Label $ml={9} $mt={2}>Ans.</Label>
          <TimeField>0:00.000</TimeField>
          <TimeField>1:05.056</TimeField>
          <TimeField>1:05.056</TimeField>
        </TimeGrid>
      </BottomRow>
      <Splitter />
      <BottomRow>
        <Grip />
        <MeterBox>
          <svg width="990" height="35" viewBox="12 922 990 35" shapeRendering="crispEdges">
            <path d="M12 922h989v30H12z" fill="#000" />
            <path d="M12 952.500h989.500v-30.500" stroke={C.light} fill="none" />
            <path d="M14.500 922v14M14.500 938v14" stroke="#fff000" />
            <path d="M981.500 922v30M981.500 936.500h20" stroke={C.light} />
            <g transform="translate(0 953)">
              <path d={ticks(14.5, 13.4, 72, 3, 3, 1)} stroke="#d3d9e2" />
            </g>
          </svg>
          <MeterText>
            <RulerMark $w={22} $align="left">dB</RulerMark>
            {Array.from({ length: 24 }, (_, i) => <MeterMark key={i}>{i === 23 ? '0' : String(-69 + i * 3)}</MeterMark>)}
          </MeterText>
        </MeterBox>
        <VSplit />
        <Grip />
        <TempoBox>
          <TempoRow>
            <Label $ml={7} $mt={3} $w={35} $ls={0.2}>Tempo</Label>
            <SmallField $w={35} $ml={1} $ls={0.6}>129</SmallField>
            <Label $ml={3} $mt={3} $w={30}>bpm,</Label>
            <SmallField $w={20}>4</SmallField>
            <Label $ml={2} $mt={3} $w={58} $ls={0.3}>Schläge/T.</Label>
            <ActionButton $ml={1}>Einstellen...</ActionButton>
          </TempoRow>
          <TempoRow>
            <Label $ml={13} $mt={2} $w={29}>Taste</Label>
            <SmallField $w={62} $ml={1} $lh={20}>
              (keine)
              <DropButton><svg width="13" height="14"><path d="M3 5h7l-3.500 4z" fill="#000" /></svg></DropButton>
            </SmallField>
            <SmallField $w={74} $ml={6} $lh={20} $ls={0.4}>
              4/4-Takt
              <DropButton><svg width="13" height="14"><path d="M3 5h7l-3.500 4z" fill="#000" /></svg></DropButton>
            </SmallField>
            <ActionButton $ml={7}>Metronom</ActionButton>
          </TempoRow>
        </TempoBox>
      </BottomRow>
      <StatusBar>
        <StatusRow>
          <StatusText $w={801}>Gestoppt</StatusText>
          <StatusText $w={134} $cell $ls={-0.25}>cine-Output-FL</StatusText>
          <StatusText $w={166} $cell $ls={-0.3}>48000 • 32-Bit werden gemischt</StatusText>
          <StatusText $w={65} $cell $ls={-0.1}>33.91 MB</StatusText>
          <StatusText $w={94} $cell $ls={-0.2}>28.43 GB frei</StatusText>
        </StatusRow>
        <TaskStrip>
          <TaskEdge $w={51} $c="#fff" />
          <TaskEdge $w={330} />
          <TaskEdge $w={120} $c="#fff" />
          <TaskEdge $w={116} $c="#fff" />
          <TaskEdge $w={126} $c="#fff" />
          <TaskEdge $w={90} $c="#777" />
          <TaskEdge $w={88} $c="#fff" />
          <TaskEdge $w={90} $c="#fff" />
          <TaskEdge $w={90} $c="#fff" />
        </TaskStrip>
      </StatusBar>
    </Frame>
  );
}
